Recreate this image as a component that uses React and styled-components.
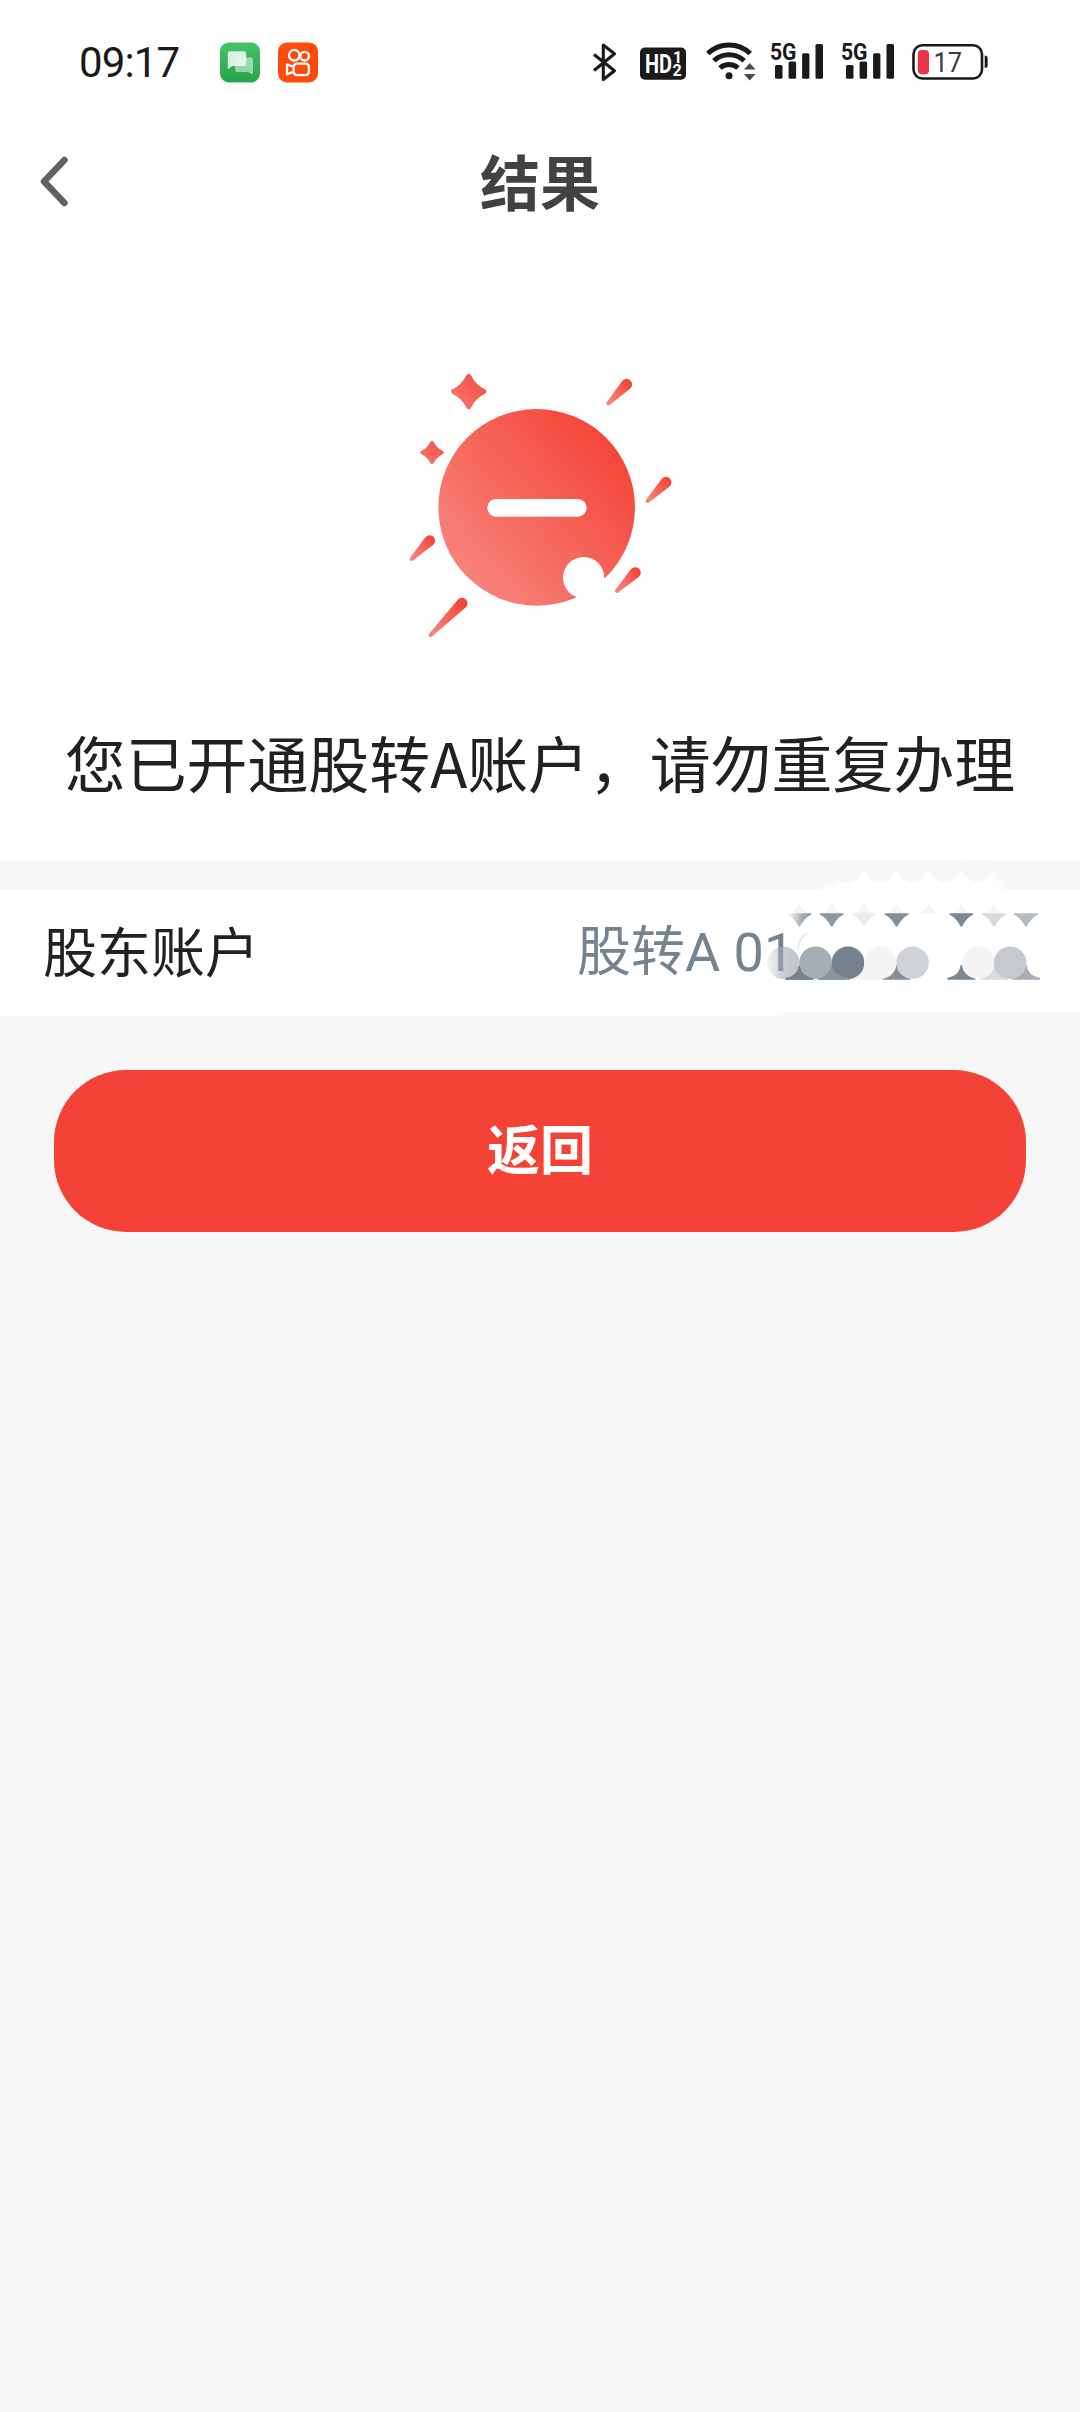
import React from "react";
import styled, { createGlobalStyle } from "styled-components";

const GlobalStyle = createGlobalStyle`
  * { box-sizing: border-box; }
  html, body, #root { margin: 0; padding: 0; }
  body { background: #f7f7f7; font-family: "Noto Sans CJK SC", sans-serif; }
`;

const Screen = styled.main`
  display: flex;
  flex-direction: column;
  width: 1080px;
  min-height: 2412px;
  background: #f7f7f7;
`;

const StatusBar = styled.header`
  display: flex;
  align-items: flex-start;
  justify-content: space-between;
  height: 124px;
  padding: 40px 92px 0 79px;
  background: #fff;
`;

const StatusGroup = styled.div`
  display: flex;
  align-items: center;
  height: 44px;
  gap: ${(p) => p.$gap}px;
`;

const Clock = styled.time`
  width: 123px;
  padding-top: 2px;
  font: 400 42px/44px Roboto, sans-serif;
  letter-spacing: -0.9px;
  color: #1a1a1a;
`;

const Glyph = styled.svg`
  display: block;
  flex: none;
  width: ${(p) => p.$w}px;
  height: ${(p) => p.$h || 44}px;
  overflow: visible;
`;

const NavBar = styled.nav`
  display: grid;
  grid-template-columns: 120px 1fr 120px;
  align-items: start;
  height: 120px;
  background: #fff;
`;

const BackButton = styled.button`
  display: flex;
  height: 120px;
  padding: 31px 0 0 38px;
  border: 0;
  background: none;
`;

const Title = styled.h1`
  margin: 0;
  font-size: 60px;
  line-height: 112px;
  font-weight: 700;
  text-align: center;
  color: #424242;
`;

const Result = styled.section`
  display: flex;
  flex-direction: column;
  align-items: center;
  height: 617px;
  padding-top: 106px;
  background: #fff;
`;

const Message = styled.p`
  margin: 67px 0 0;
  font-size: 60.9px;
  line-height: 90px;
  white-space: nowrap;
  color: #212121;
`;

const AccountRow = styled.section`
  position: relative;
  display: flex;
  align-items: center;
  height: 127px;
  margin-top: 28px;
  padding-left: 43px;
  background: #fff;
  font-size: 54px;
  line-height: 80px;
`;

const Label = styled.span`
  width: 534px;
  padding-bottom: 6px;
  color: #212121;
`;

const Value = styled.span`
  white-space: pre;
  font-family: Roboto, "Noto Sans CJK SC", sans-serif;
  color: #75828f;
`;

const MosaicLayer = styled.svg`
  position: absolute;
  right: 0;
  top: -29px;
  width: 320px;
  height: 200px;
`;

const ReturnButton = styled.button`
  height: 162px;
  margin: 54px 54px 0;
  padding: 0 0 8px;
  border: 0;
  border-radius: 72px;
  background: #f44336;
  color: #fff;
  font: 700 53px/154px "Noto Sans CJK SC", sans-serif;
`;

const INK = "#1a1a1a";

function MessagesIcon() {
  return (
    <Glyph $w={40} viewBox="220 40 40 44">
      <defs>
        <linearGradient id="msg" x1="0" y1="0" x2="0" y2="1">
          <stop offset="0" stopColor="#46c268" />
          <stop offset="1" stopColor="#27a54c" />
        </linearGradient>
      </defs>
      <rect x="220" y="42.4" width="40" height="40" rx="9" fill="url(#msg)" />
      <path d="M236 57.5h15a2 2 0 0 1 2 2v15l-5-2.5h-11a2 2 0 0 1-2-2v-10.500a2 2 0 0 1 1-2z" fill="#fff" opacity=".5" />
      <path d="M230 51.200h14a2.200 2.200 0 0 1 2.200 2.200v10.500a2.200 2.200 0 0 1-2.200 2.200h-11.500l-4.700 3v-15.700a2.200 2.200 0 0 1 2.200-2.200z" fill="#e6f8ea" opacity=".93" />
    </Glyph>
  );
}

function VideoAppIcon() {
  return (
    <Glyph $w={40} viewBox="278 40 40 44">
      <rect x="278" y="42.400" width="40" height="40" rx="9" fill="#fe4a0b" />
      <g fill="none" stroke="#fff" strokeWidth="2.300" strokeLinejoin="round">
        <circle cx="294.300" cy="55.200" r="5.300" />
        <circle cx="304.600" cy="56.200" r="4.300" />
        <rect x="293.600" y="63.600" width="15.300" height="11.600" rx="3.500" />
        <path d="M293.500 67l-6.500-2.600v10l6.500-2.600" />
      </g>
    </Glyph>
  );
}

function BluetoothIcon() {
  return (
    <Glyph $w={24} viewBox="593 40 24 44">
      <path d="M594 54.500L614.500 70.800 603.300 79.500V45l11.200 8.700L594 70.500" fill="none" stroke={INK} strokeWidth="3.100" strokeLinejoin="round" />
    </Glyph>
  );
}

function HdIcon() {
  return (
    <Glyph $w={46} viewBox="640 40 46 44">
      <rect x="640" y="47.500" width="46" height="32.300" rx="5" fill={INK} />
      <g fill="#fff" fontFamily="Roboto, sans-serif" fontWeight="700">
        <text x="645" y="72.700" fontSize="25" textLength="27" lengthAdjust="spacingAndGlyphs">HD</text>
        <text x="673" y="63" fontSize="16">1</text>
        <text x="672.500" y="75.800" fontSize="16">2</text>
      </g>
    </Glyph>
  );
}

function WifiIcon() {
  return (
    <Glyph $w={50} viewBox="706 40 50 44">
      <g fill="none" stroke={INK} strokeWidth="5">
        <path d="M707.800 53.500a30.500 30.500 0 0 1 42.400 0" />
        <path d="M713.800 60.800a22 22 0 0 1 30.400 0" />
        <path d="M720 68a13.200 13.200 0 0 1 18 0" />
      </g>
      <circle cx="729" cy="75.800" r="3.500" fill={INK} />
      <path d="M744 69.500h11.500L749.700 63zM744 74h11.500l-5.800 6.500z" fill="#4a4a4a" />
    </Glyph>
  );
}

function SignalIcon() {
  return (
    <Glyph $w={52} viewBox="771 40 52 44">
      <text x="770" y="59.600" fontFamily="Roboto, sans-serif" fontWeight="700" fontSize="24.500" textLength="26.500" lengthAdjust="spacingAndGlyphs" fill={INK}>5G</text>
      <g fill={INK}>
        <rect x="775" y="65" width="7.500" height="13.700" rx="1.500" />
        <rect x="788.600" y="61.500" width="7.500" height="17.200" rx="1.500" />
        <rect x="802.100" y="53.200" width="7.300" height="25.500" rx="1.500" />
        <rect x="815.500" y="44" width="7.500" height="34.700" rx="1.500" />
      </g>
    </Glyph>
  );
}

function BatteryIcon() {
  return (
    <Glyph $w={76} viewBox="912 40 76 44">
      <rect x="913.500" y="45.200" width="68.500" height="33.300" rx="9" fill="none" stroke={INK} strokeWidth="2.600" />
      <path d="M984.700 55.500a3 3 0 0 1 3 3v6.500a3 3 0 0 1-3 3z" fill={INK} />
      <rect x="917.800" y="50" width="11.200" height="24.200" rx="4" fill="#e9334a" />
      <text x="933.500" y="72" fontFamily="Roboto, sans-serif" fontSize="27" textLength="28.500" lengthAdjust="spacingAndGlyphs" fill="#3c3c3c">17</text>
    </Glyph>
  );
}

/* A streak that widens from a small round tail to a round head. */
function Streak({ tail, head }) {
  const [x1, y1] = tail;
  const [x2, y2] = head;
  const r1 = 6;
  const r2 = 16.5;
  const length = Math.hypot(x2 - x1, y2 - y1);
  const angle = Math.atan2(y2 - y1, x2 - x1);
  const spread = Math.acos((r1 - r2) / length);
  const at = (r, x, y, a) => `${x + r * Math.cos(a)} ${y + r * Math.sin(a)}`;
  const side = Math.PI - spread;
  const d = [
    `M${at(r1, x1, y1, angle + side)}`,
    `M${at(r1, x1, y1, angle + spread)}`,
    `L${at(r2, x2, y2, angle + spread)}`,
    `A${r2} ${r2} 0 1 0 ${at(r2, x2, y2, angle - spread)}`,
    `L${at(r1, x1, y1, angle - spread)}`,
    `A${r1} ${r1} 0 0 0 ${at(r1, x1, y1, angle + spread)}Z`,
  ].join("");
  return <path d={d} fill="url(#coral)" />;
}

const STREAKS = [
  { tail: [655, 160], head: [710, 103] },
  { tail: [773, 453], head: [828, 397] },
  { tail: [65, 627], head: [119, 572] },
  { tail: [681, 723], head: [736, 668] },
  { tail: [122, 855], head: [216, 760] },
];

function Illustration() {
  return (
    <Glyph $w={300} $h={300} viewBox="0 0 900 900">
      <defs>
        <linearGradient id="coral" x1=".14" y1=".86" x2=".9" y2=".18">
          <stop offset="0" stopColor="#f7837b" />
          <stop offset="1" stopColor="#f44639" />
        </linearGradient>
        <linearGradient id="star" x1="0" y1="1" x2="1" y2="0">
          <stop offset="0" stopColor="#f67a71" />
          <stop offset="1" stopColor="#f44e42" />
        </linearGradient>
      </defs>
      <circle cx="440" cy="472" r="295" fill="url(#coral)" />
      <circle cx="581" cy="683" r="62" fill="#fff" />
      <rect x="292" y="447" width="298" height="53" rx="26.500" fill="#fff" />
      <g fill="url(#star)">
        <path d="M229 76Q236 66 243 76Q257 105 285 118Q293 124 285 131Q257 144 243 173Q236 183 229 173Q215 144 187 131Q179 124 187 118Q215 105 229 76Z" />
        <path d="M121 276Q126 268 131 276Q141 295 158 303Q166 308 158 312Q141 321 131 339Q126 347 121 339Q111 321 94 312Q86 308 94 303Q111 295 121 276Z" />
      </g>
      {STREAKS.map((s) => (
        <Streak key={s.tail.join()} {...s} />
      ))}
    </Glyph>
  );
}

const DOTS = [
  [783.2, "url(#dotFade)"],
  [815.6, "#a4acb4"],
  [848, "#75818d"],
  [880.3, "#f4f4f4"],
  [912.6, "#cfd3d8"],
  [978.3, "#f4f4f4"],
  [1010.2, "#c6cace"],
];

const GAPS = [
  [799.3, "url(#gapFade)", "#75828e"],
  [831.7, "#8e98a2", "#8e98a2"],
  [864, "#eceeee", "#f1f2f2"],
  [896.6, "#848f99", "#848f99"],
  [961.3, "#7b8793", "#7b8793"],
  [994, "#d7dbdd", "#d7dbdd"],
  [1026, "#b4bbc1", "#a7afb7"],
];

const FAINT = [799, 831.7, 864, 896.6, 929, 961.3, 994];
const SCALLOPS = [848, 880.3, 912.6, 945, 977.5];

function Mosaic() {
  return (
    <MosaicLayer viewBox="760 860 320 200">
      <defs>
        <linearGradient id="dotFade">
          <stop offset="0" stopColor="#a9afb4" stopOpacity=".1" />
          <stop offset=".55" stopColor="#a9afb4" stopOpacity=".65" />
          <stop offset="1" stopColor="#c6cacd" />
        </linearGradient>
        <linearGradient id="gapFade">
          <stop offset="0" stopColor="#fff" />
          <stop offset=".6" stopColor="#a5adb5" />
          <stop offset="1" stopColor="#8b959f" />
        </linearGradient>
        <linearGradient id="coverFade">
          <stop offset="0" stopColor="#fff" stopOpacity="0" />
          <stop offset=".2" stopColor="#fff" />
          <stop offset=".84" stopColor="#fff" />
          <stop offset="1" stopColor="#fff" stopOpacity="0" />
        </linearGradient>
        <linearGradient id="edgeFade">
          <stop offset="0" stopColor="#f7f7f7" stopOpacity="0" />
          <stop offset=".06" stopColor="#f7f7f7" />
        </linearGradient>
      </defs>
      <path d="M812 890Q840 880 864 871H994Q1000 881 1012 890Z" fill="url(#coverFade)" />
      {SCALLOPS.map((x) => (
        <circle key={x} cx={x} cy="866" r="16" fill="#f7f7f7" />
      ))}
      <rect x="770" y="1012" width="310" height="5" fill="url(#edgeFade)" />
      {FAINT.map((x) => (
        <path key={x} d={`M${x - 10} 913Q${x - 1} 910 ${x} 901Q${x + 1} 910 ${x + 10} 913Z`} fill="#f5f5f5" />
      ))}
      {GAPS.map(([x, top, bottom]) => (
        <g key={x}>
          <path d={`M${x - 12} 913.300H${x + 12}V914.500Q${x + 5} 918 ${x + 0.8} 926.500H${x - 0.8}Q${x - 5} 918 ${x - 12} 914.500Z`} fill={top} />
          <path d={`M${x - 14} 979.700V978Q${x - 2} 976 ${x - 0.6} 965H${x + 0.6}Q${x + 2} 976 ${x + 14} 978V979.700Z`} fill={bottom} />
        </g>
      ))}
      <path d="M798 950Q799 937 807 933" fill="none" stroke="#e9ebec" strokeWidth="2" />
      {DOTS.map(([x, fill]) => (
        <circle key={x} cx={x} cy="962.700" r="16.300" fill={fill} />
      ))}
      <path d="M786 979.700V978Q797 976 798.700 966H799.900Q801 976 813 978V979.700Z" fill="#75828e" />
      <path d="M818 979.700Q830 974 831.700 966Q833 976 850 978.300V979.700Z" fill="#8a95a0" />
    </MosaicLayer>
  );
}

export default function App() {
  return (
    <Screen>
      <GlobalStyle />
      <StatusBar>
        <StatusGroup $gap={18}>
          <Clock>09:17</Clock>
          <MessagesIcon />
          <VideoAppIcon />
        </StatusGroup>
        <StatusGroup $gap={23}>
          <BluetoothIcon />
          <StatusGroup $gap={15}>
            <StatusGroup $gap={20}>
              <HdIcon />
              <WifiIcon />
            </StatusGroup>
            <StatusGroup $gap={18.5}>
              <SignalIcon />
              <SignalIcon />
              <BatteryIcon />
            </StatusGroup>
          </StatusGroup>
        </StatusGroup>
      </StatusBar>
      <NavBar>
        <BackButton aria-label="返回">
          <Glyph $w={32} $h={52} viewBox="38 155 32 52">
            <path d="M64.500 160L44 181.500L64.500 203" fill="none" stroke="#616161" strokeWidth="6.500" strokeLinecap="round" strokeLinejoin="round" />
          </Glyph>
        </BackButton>
        <Title>结果</Title>
      </NavBar>
      <Result>
        <Illustration />
        <Message>您已开通股转A账户，请勿重复办理</Message>
      </Result>
      <AccountRow>
        <Label>股东账户</Label>
        <Value>股转A 01</Value>
        <Mosaic />
      </AccountRow>
      <ReturnButton>返回</ReturnButton>
    </Screen>
  );
}
